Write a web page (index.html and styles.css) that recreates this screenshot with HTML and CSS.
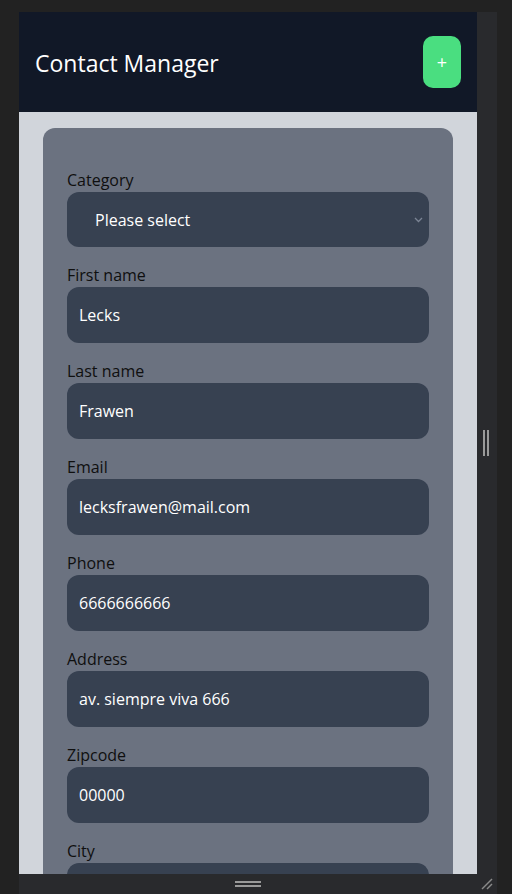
FILE: index.html
```html
<!DOCTYPE html>
<html lang="en">
<head>
<meta charset="utf-8">
<title>Contact Manager</title>
<link rel="stylesheet" href="styles.css">
</head>
<body>
<div class="emulator">
  <div class="viewport">
    <header class="app-header">
      <h1 class="app-title">Contact Manager</h1>
      <button class="add-btn" type="button">+</button>
    </header>
    <main class="app-main">
      <form class="card">
        <div class="field">
          <label class="field-label">Category</label>
          <div class="select-wrap">
            <select class="field-input field-select">
              <option>Please select</option>
            </select>
            <svg class="chevron" width="9" height="6" viewBox="0 0 9 6"><polyline points="1,1 4.5,4.5 8,1" fill="none" stroke="#7b8494" stroke-width="1.3"/></svg>
          </div>
        </div>
        <div class="field">
          <label class="field-label">First name</label>
          <input class="field-input" type="text" value="Lecks">
        </div>
        <div class="field">
          <label class="field-label">Last name</label>
          <input class="field-input" type="text" value="Frawen">
        </div>
        <div class="field">
          <label class="field-label">Email</label>
          <input class="field-input" type="text" value="lecksfrawen@mail.com">
        </div>
        <div class="field">
          <label class="field-label">Phone</label>
          <input class="field-input" type="text" value="6666666666">
        </div>
        <div class="field">
          <label class="field-label">Address</label>
          <input class="field-input" type="text" value="av. siempre viva 666">
        </div>
        <div class="field">
          <label class="field-label">Zipcode</label>
          <input class="field-input" type="text" value="00000">
        </div>
        <div class="field">
          <label class="field-label">City</label>
          <input class="field-input" type="text" value="">
        </div>
      </form>
    </main>
  </div>
  <div class="side-bar">
    <span class="grip-v"></span>
  </div>
  <div class="bottom-bar">
    <span class="grip-h"></span>
  </div>
  <div class="corner">
    <svg width="14" height="14" viewBox="0 0 14 14"><line x1="2" y1="12" x2="12" y2="2" stroke="#8a8a8a" stroke-width="1.5"/><line x1="7" y1="12" x2="12" y2="7" stroke="#8a8a8a" stroke-width="1.5"/></svg>
  </div>
</div>
</body>
</html>
```

FILE: styles.css
```css
* { box-sizing: border-box; }
html, body { margin: 0; padding: 0; }
body {
  background: #222222;
  width: 512px;
  height: 894px;
  overflow: hidden;
  font-family: "Open Sans", "Noto Sans", sans-serif;
}
.emulator {
  display: grid;
  grid-template-columns: 458px 20px;
  grid-template-rows: 862px 20px;
  margin: 12px 0 0 19px;
  width: 478px;
}
.viewport {
  grid-column: 1;
  grid-row: 1;
  overflow: hidden;
  background: #d1d5db;
}
.app-header {
  height: 100px;
  background: #111827;
  display: flex;
  align-items: center;
  justify-content: space-between;
  padding: 0 16px;
}
.app-title {
  margin: 0;
  color: #ffffff;
  font-size: 23px;
  font-weight: 400;
  line-height: 32px;
  padding-top: 2px;
}
.add-btn {
  width: 38px;
  height: 52px;
  border: 0;
  border-radius: 10px;
  background: #4ade80;
  color: #ffffff;
  font-family: inherit;
  font-size: 18px;
  line-height: 1;
  padding: 0;
}
.app-main {
  padding: 16px 24px;
}
.card {
  background: #6b7280;
  border-radius: 12px;
  padding: 40px 24px 24px;
  display: flex;
  flex-direction: column;
  gap: 16px;
}
.field {
  display: flex;
  flex-direction: column;
}
.field-label {
  color: #0f0f0f;
  font-size: 16px;
  line-height: 24px;
}
.select-wrap {
  position: relative;
}
.field-input {
  display: block;
  width: 100%;
  height: 56px;
  border: 0;
  border-radius: 12px;
  background: #374151;
  color: #ffffff;
  font-family: inherit;
  font-size: 16px;
  line-height: 24px;
  padding: 16px 12px;
  outline: none;
}
.field-select {
  appearance: none;
  -webkit-appearance: none;
  height: 55px;
  padding-left: 28px;
}
.chevron {
  position: absolute;
  right: 6px;
  top: 25px;
}
.side-bar {
  grid-column: 2;
  grid-row: 1;
  background: #292a2d;
  display: flex;
  align-items: center;
  justify-content: center;
}
.grip-v {
  width: 6px;
  height: 26px;
  border-left: 2px solid #9a9a9a;
  border-right: 2px solid #9a9a9a;
  margin-right: 2px;
}
.bottom-bar {
  grid-column: 1;
  grid-row: 2;
  background: #292a2d;
  display: flex;
  justify-content: center;
  align-items: center;
}
.grip-h {
  width: 26px;
  height: 6px;
  border-top: 2px solid #9a9a9a;
  border-bottom: 2px solid #9a9a9a;
}
.corner {
  grid-column: 2;
  grid-row: 2;
  background: #292a2d;
  display: flex;
  align-items: center;
  justify-content: center;
}
.corner svg { display: block; }
```
